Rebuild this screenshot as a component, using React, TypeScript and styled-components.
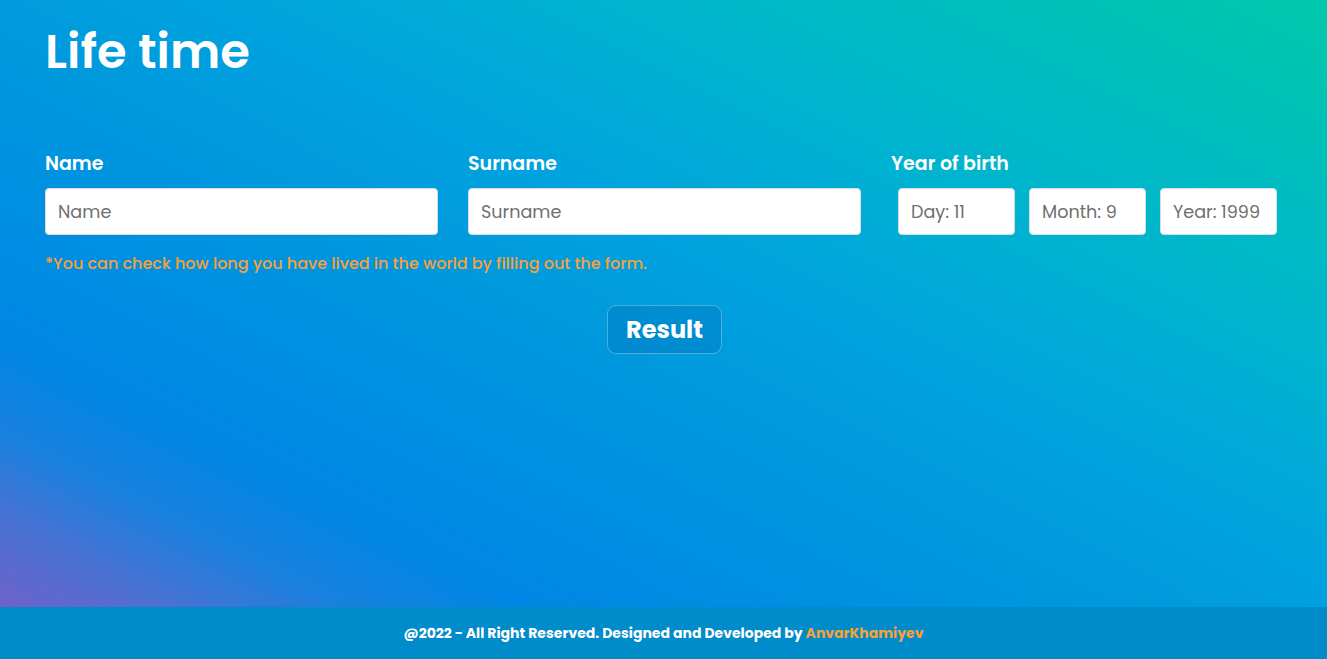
import React from "react";
import styled, { createGlobalStyle } from "styled-components";

const GlobalStyle = createGlobalStyle`
  * { box-sizing: border-box; }
  html, body { margin: 0; padding: 0; }
  body {
    font-family: "Poppins", "Open Sans", sans-serif;
    min-height: 100vh;
    background: linear-gradient(27deg, #7d5bc6 0%, #7360c8 3%, #4d70d2 10%, #1a80de 17%, #0087e5 24%, #0090e1 36%, #0099dd 47%, #00a1df 56%, #00b3d0 72%, #00c2b5 92%, #00c8ab 100%);
  }
`;

const Page = styled.div`
  min-height: 100vh;
  display: flex;
  flex-direction: column;
`;

const Main = styled.main`
  flex: 1;
  padding: 20px 43px 0 45px;
`;

const Title = styled.h1`
  margin: 0;
  color: #fff;
  font-size: 48px;
  font-weight: 600;
  line-height: 64px;
`;

const Form = styled.form`
  margin-top: 67px;
`;

const Fields = styled.div`
  display: grid;
  grid-template-columns: repeat(3, 1fr);
  column-gap: 30px;
`;

const Field = styled.div`
  display: flex;
  flex-direction: column;
`;

const Label = styled.label`
  color: #fff;
  font-size: 19px;
  font-weight: 600;
  line-height: 26px;
  margin-bottom: 11px;
`;

const Input = styled.input`
  height: 47px;
  width: 100%;
  border: 1px solid #d8dde3;
  border-radius: 4px;
  background: #fff;
  padding: 0 12px;
  font-family: inherit;
  font-size: 17.6px;
  color: #333;
  outline: none;
  &::placeholder { color: #6f6f6f; }
`;

const DateRow = styled.div`
  display: flex;
`;

const DateInput = styled(Input)`
  flex: 1;
  min-width: 0;
  margin: 0 7px;
`;

const Hint = styled.p`
  margin: 18px 0 0 0;
  color: #f7a13a;
  font-size: 16px;
  font-weight: 500;
  line-height: 22px;
`;

const ButtonRow = styled.div`
  display: flex;
  justify-content: center;
  margin-top: 30px;
`;

const ResultButton = styled.button`
  height: 49px;
  padding: 0 18.5px;
  border-radius: 9px;
  border: 1px solid rgba(255, 255, 255, 0.3);
  background: rgba(0, 100, 175, 0.28);
  color: #fff;
  font-family: inherit;
  font-size: 24px;
  font-weight: 700;
  cursor: pointer;
`;

const Footer = styled.footer`
  height: 52px;
  background: #008bcb;
  display: flex;
  align-items: center;
  justify-content: center;
  color: #fff;
  font-size: 14px;
  font-weight: 700;
  white-space: pre;
`;

const Author = styled.span`
  color: #f7a238;
`;

export default function App() {
  return (
    <>
      <GlobalStyle />
      <Page>
        <Main>
          <Title>Life time</Title>
          <Form onSubmit={(e) => e.preventDefault()}>
            <Fields>
              <Field>
                <Label>Name</Label>
                <Input placeholder="Name" />
              </Field>
              <Field>
                <Label>Surname</Label>
                <Input placeholder="Surname" />
              </Field>
              <Field>
                <Label>Year of birth</Label>
                <DateRow>
                  <DateInput placeholder="Day: 11" />
                  <DateInput placeholder="Month: 9" />
                  <DateInput placeholder="Year: 1999" />
                </DateRow>
              </Field>
            </Fields>
            <Hint>*You can check how long you have lived in the world by filling out the form.</Hint>
            <ButtonRow>
              <ResultButton type="submit">Result</ResultButton>
            </ButtonRow>
          </Form>
        </Main>
        <Footer>
          {"@2022 - All Right Reserved. Designed and Developed by "}
          <Author>AnvarKhamiyev</Author>
        </Footer>
      </Page>
    </>
  );
}
